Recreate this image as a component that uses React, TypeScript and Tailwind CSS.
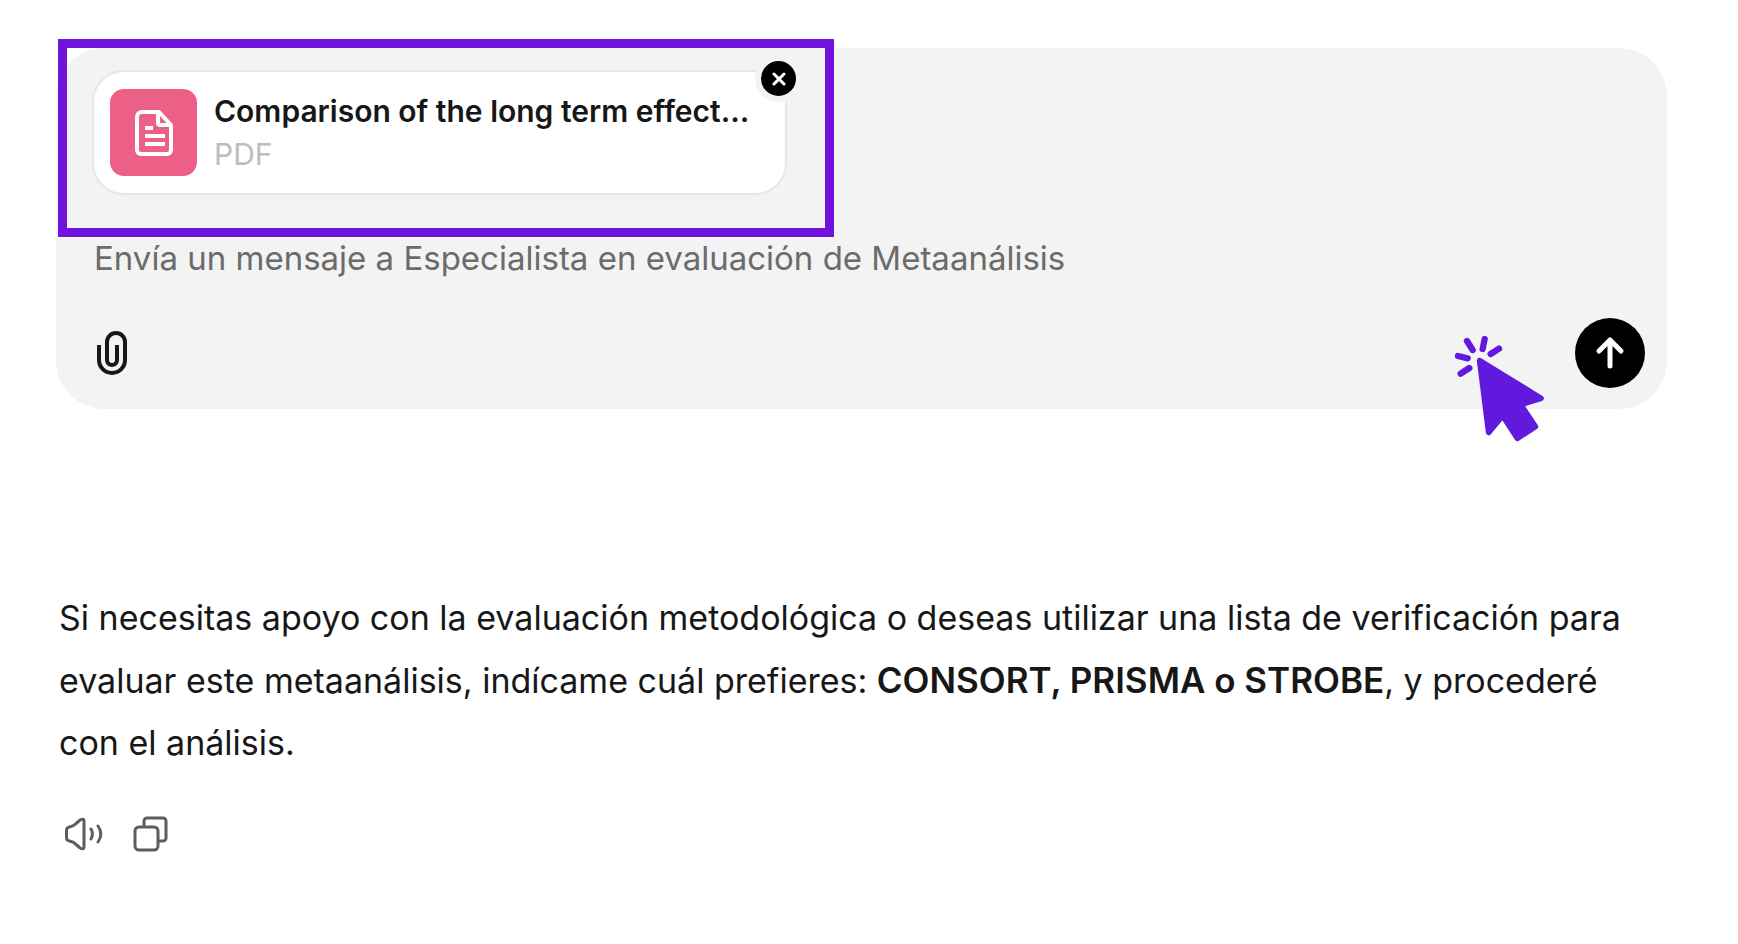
import { useState } from 'react'
import type { ReactNode } from 'react'

type IconButtonProps = {
  label: string
  onClick?: () => void
  children: ReactNode
}

function IconButton({ label, onClick, children }: IconButtonProps) {
  return (
    <button type="button" aria-label={label} onClick={onClick} className="flex size-10 items-center justify-center text-[#5d5d5d]">
      {children}
    </button>
  )
}

function DocumentIcon() {
  return (
    <svg viewBox="0 0 38 46" className="h-[46px] w-[38px]" fill="none" stroke="currentColor" strokeWidth="4" strokeLinejoin="round">
      <path d="M7 2h17l12 13v25a4 4 0 0 1-4 4H6a4 4 0 0 1-4-4V7a5 5 0 0 1 5-5Z" />
      <path d="M23 2v11a2 2 0 0 0 2 2h11" />
      <path d="M10 18h8M10 26h20M10 34h20" />
    </svg>
  )
}

function PaperclipIcon() {
  return (
    <svg viewBox="0 0 32 44" className="h-11 w-8" fill="none" stroke="currentColor" strokeWidth="4">
      <path d="M3 14v15a13 13 0 0 0 26 0V11a9 9 0 0 0-18 0v18a5 5 0 0 0 10 0V14" />
    </svg>
  )
}

function SpeakerIcon() {
  return (
    <svg viewBox="0 0 40 36" className="h-9 w-10" fill="none" stroke="currentColor" strokeWidth="3" strokeLinecap="round" strokeLinejoin="round">
      <path d="M21 5v26c0 2-2.500 2.500-4.500.5l-4-3.500C11 26.500 10 26 8 25.500c-3-.5-4.500-1.500-4.500-3.500v-8c0-2 1.500-3 4.500-3.500 2-.5 3-1 4.500-2.500l4-3.500C18.500 2.500 21 3 21 5Z" />
      <path d="M28 13c2 3.500 2 6.500 0 10M35 10c3.500 5 3.500 11 0 16" />
    </svg>
  )
}

function CopyIcon() {
  return (
    <svg viewBox="0 0 36 36" className="size-9" fill="none" stroke="currentColor" strokeWidth="3">
      <rect x="2" y="11" width="23" height="23" rx="4" />
      <path d="M11 11V5a3 3 0 0 1 3-3h16a3 3 0 0 1 3 3v17a3 3 0 0 1-3 3h-5" />
    </svg>
  )
}

function ClickPointer() {
  return (
    <svg viewBox="99 99 282 330" aria-hidden className="pointer-events-none absolute right-[120px] -bottom-[34px] h-[110px] w-[94px] text-[#611add]">
      <path
        d="M179 182 363 295 302 314 346 380 292 415 248 347 206 397Z"
        fill="currentColor"
        stroke="currentColor"
        strokeWidth="17"
        strokeLinejoin="round"
      />
      <path
        d="M141 123l17 27M194 117l-6 30M237 146l-25 16M114 168l29 7M148 204l-26 17"
        fill="none"
        stroke="currentColor"
        strokeWidth="19"
        strokeLinecap="round"
      />
    </svg>
  )
}

function Attachment({ name, kind, onRemove }: { name: string; kind: string; onRemove: () => void }) {
  return (
    <div className="relative flex w-[695px] items-center gap-[17px] rounded-[32px] border-2 border-[#e7e7e7] bg-white px-4 py-[17px]">
      <div className="flex size-[87px] shrink-0 items-center justify-center rounded-[14px] bg-[#ec6088] text-white">
        <DocumentIcon />
      </div>
      <div className="min-w-0 text-[30px] leading-[43px]">
        <div className="truncate font-semibold text-[#171717]">{name}</div>
        <div className="text-[#bdbdbd]">{kind}</div>
      </div>
      <button
        type="button"
        aria-label="Quitar archivo"
        onClick={onRemove}
        className="absolute -top-[17px] -right-[17px] flex size-[47px] items-center justify-center rounded-full border-[6px] border-[#f3f3f3] bg-black text-white"
      >
        <svg viewBox="0 0 14 14" className="size-[14px]" stroke="currentColor" strokeWidth="3" strokeLinecap="round">
          <path d="M2 2l10 10M12 2 2 12" />
        </svg>
      </button>
    </div>
  )
}

export default function App() {
  const [attached, setAttached] = useState(true)
  const [message, setMessage] = useState('')

  return (
    <main className="min-h-screen bg-white pt-12 pr-[71px] pl-14 font-['Inter',sans-serif] text-[#171717]">
      <form
        onSubmit={(e) => e.preventDefault()}
        className="relative rounded-[48px] bg-[#f3f3f3] px-9 pt-[22px] pb-[21px]"
      >
        {attached && (
          <>
            <Attachment name="Comparison of the long term effect..." kind="PDF" onRemove={() => setAttached(false)} />
            <div aria-hidden className="pointer-events-none absolute -top-[9px] left-[2px] h-[198px] w-[776px] border-[9px] border-[#7013dc]" />
          </>
        )}
        <textarea
          rows={1}
          value={message}
          onChange={(e) => setMessage(e.target.value)}
          aria-label="Mensaje"
          placeholder="Envía un mensaje a Especialista en evaluación de Metaanálisis"
          className="mt-[39px] block h-12 w-full resize-none overflow-hidden bg-transparent pl-[2px] text-[33px] leading-[48px] outline-none placeholder:text-[#6b6b6b]"
        />
        <div className="mt-9 flex items-center justify-between">
          <button type="button" aria-label="Adjuntar archivo" className="pl-1">
            <PaperclipIcon />
          </button>
          <button type="submit" aria-label="Enviar" className="-mr-3.5 flex size-[70px] items-center justify-center rounded-full bg-black text-white">
            <svg viewBox="0 0 30 34" className="h-[34px] w-[30px]" fill="none" stroke="currentColor" strokeWidth="5" strokeLinecap="round" strokeLinejoin="round">
              <path d="M15 30V4M4 15 15 4l11 11" />
            </svg>
          </button>
        </div>
        <ClickPointer />
      </form>

      <article className="mt-[178px] pr-8 pl-[3px]">
        <p className="text-[34px] leading-[62px]">
          Si necesitas apoyo con la evaluación metodológica o deseas utilizar una lista de verificación para evaluar este
          metaanálisis, indícame cuál prefieres: <strong className="text-[35px] font-semibold">CONSORT, PRISMA o STROBE</strong>, y
          procederé con el análisis.
        </p>
        <div className="mt-10 flex gap-7 pl-1">
          <IconButton label="Leer en voz alta">
            <SpeakerIcon />
          </IconButton>
          <IconButton label="Copiar">
            <CopyIcon />
          </IconButton>
        </div>
      </article>
    </main>
  )
}
